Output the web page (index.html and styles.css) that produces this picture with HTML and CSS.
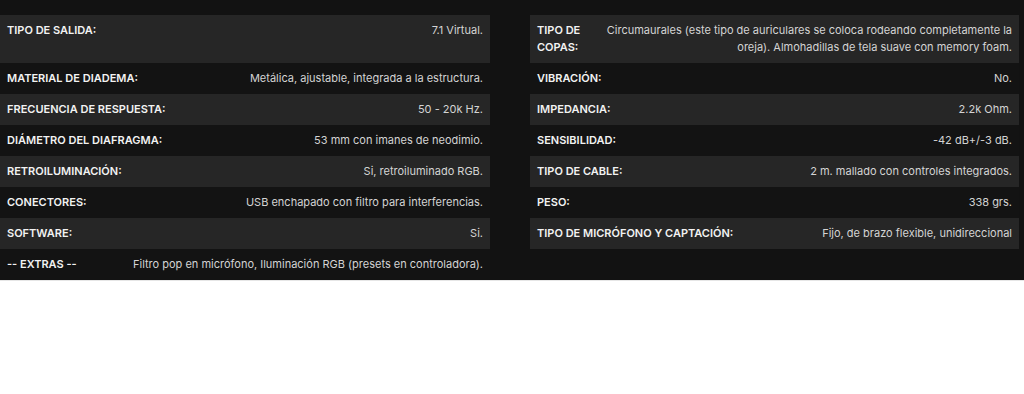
FILE: index.html
```html
<!DOCTYPE html>
<html lang="es">
<head>
<meta charset="utf-8">
<title>Especificaciones</title>
<link rel="stylesheet" href="styles.css">
</head>
<body>
<section class="specs">
  <div class="row alt"><span class="label">Tipo de salida:</span><span class="value">7.1 Virtual.</span></div>
  <div class="row alt"><span class="label">Tipo de copas:</span><span class="value">Circumaurales (este tipo de auriculares se coloca rodeando completamente la oreja). Almohadillas de tela suave con memory foam.</span></div>

  <div class="row"><span class="label">Material de diadema:</span><span class="value">Metálica, ajustable, integrada a la estructura.</span></div>
  <div class="row"><span class="label">Vibración:</span><span class="value">No.</span></div>

  <div class="row alt"><span class="label">Frecuencia de respuesta:</span><span class="value">50 - 20k Hz.</span></div>
  <div class="row alt"><span class="label">Impedancia:</span><span class="value">2.2k Ohm.</span></div>

  <div class="row"><span class="label">Diámetro del diafragma:</span><span class="value">53 mm con imanes de neodimio.</span></div>
  <div class="row"><span class="label">Sensibilidad:</span><span class="value">-42 dB+/-3 dB.</span></div>

  <div class="row alt"><span class="label">Retroiluminación:</span><span class="value">Si, retroiluminado RGB.</span></div>
  <div class="row alt"><span class="label">Tipo de cable:</span><span class="value">2 m. mallado con controles integrados.</span></div>

  <div class="row"><span class="label">Conectores:</span><span class="value">USB enchapado con filtro para interferencias.</span></div>
  <div class="row"><span class="label">Peso:</span><span class="value">338 grs.</span></div>

  <div class="row alt"><span class="label">Software:</span><span class="value">Si.</span></div>
  <div class="row alt"><span class="label">Tipo de micrófono y captación:</span><span class="value">Fijo, de brazo flexible, unidireccional</span></div>

  <div class="row"><span class="label">-- Extras --</span><span class="value">Filtro pop en micrófono, Iluminación RGB (presets en controladora).</span></div>
</section>
</body>
</html>
```

FILE: styles.css
```css
html, body {
  margin: 0;
  padding: 0;
  background: #ffffff;
}

.specs {
  background: #121212;
  padding: 15px 5px 0 0;
  display: grid;
  grid-template-columns: 490px 489px;
  column-gap: 40px;
  font-family: Inter, "Open Sans", sans-serif;
  font-size: 11px;
  line-height: 17px;
  border-bottom: 1px solid #e6e6e6;
}

.row {
  display: flex;
  align-items: flex-start;
  justify-content: space-between;
  gap: 18px;
  padding: 7px 7px;
  background: #131313;
}

.row.alt {
  background: #262626;
}

.label {
  flex: 0 30 auto;
  min-width: 48px;
  color: #f2f2f2;
  font-weight: 600;
  text-transform: uppercase;
}

.value {
  flex: 0 1 auto;
  color: #d4d4d4;
  text-align: right;
}
```
